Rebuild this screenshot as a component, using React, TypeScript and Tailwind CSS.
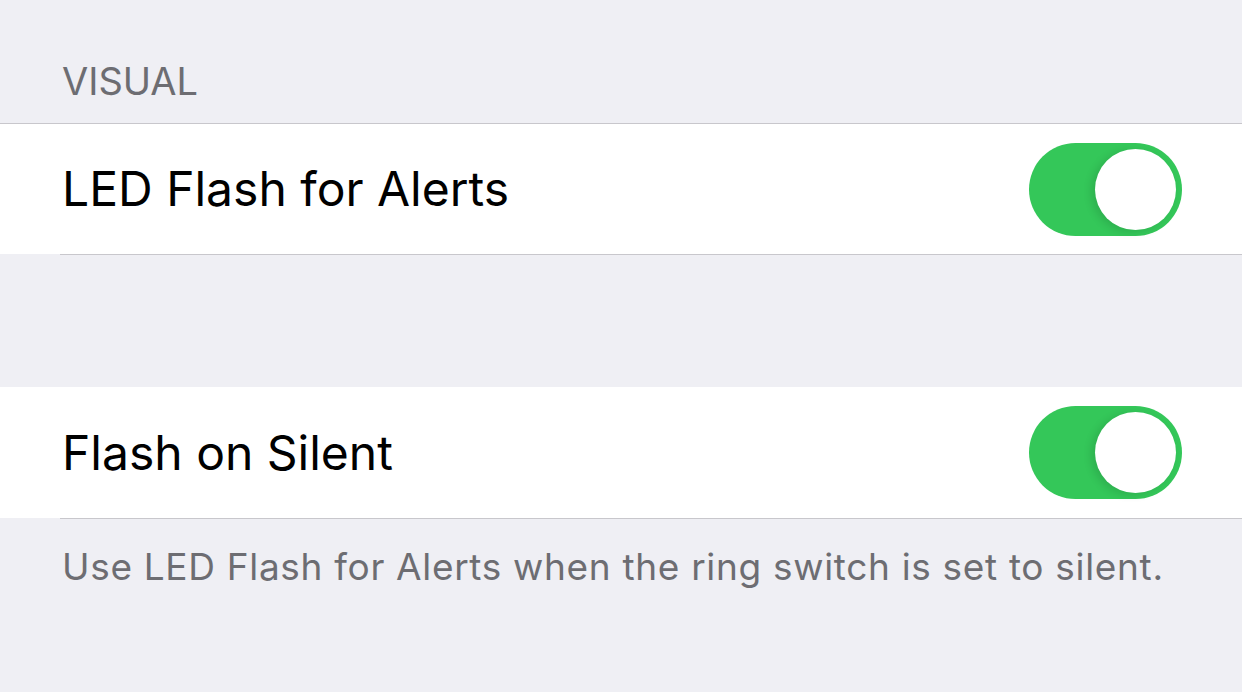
import React from 'react';

function Toggle() {
    return (
        <div className="relative w-[153px] h-[93px] rounded-full bg-[#34c759]">
            <div className="absolute right-[6px] top-[6px] w-[81px] h-[81px] rounded-full bg-white shadow-[-4px_2px_8px_rgba(0,0,0,0.12)]" />
        </div>
    );
}

function Row({ label, h }: { label: string; h: string }) {
    return (
        <div>
            <div className={`flex items-center justify-between ${h} bg-white pl-[62px] pr-[60px]`}>
                <span className="text-[48px] text-black">{label}</span>
                <Toggle />
            </div>
            <div className="h-px ml-[60px] bg-[#c8c7cc]" />
        </div>
    );
}

export default function App() {
    return (
        <div className="min-h-screen w-full bg-[#efeff4] overflow-hidden" style={{ fontFamily: 'Inter, "Noto Sans", sans-serif' }}>
            <div className="h-[123px] flex items-start pt-[58px] pl-[62px]">
                <span className="text-[38px] leading-[46px] text-[#6d6d72]">VISUAL</span>
            </div>
            <div className="h-px bg-[#c8c7cc]" />
            <Row label="LED Flash for Alerts" h="h-[130px]" />
            <div className="h-[132px]" />
            <Row label="Flash on Silent" h="h-[131px]" />
            <p className="pl-[62px] pt-[25px] text-[37px] leading-[46px] tracking-[0.68px] text-[#6d6d72]">
                Use LED Flash for Alerts when the ring switch is set to silent.
            </p>
        </div>
    );
}
